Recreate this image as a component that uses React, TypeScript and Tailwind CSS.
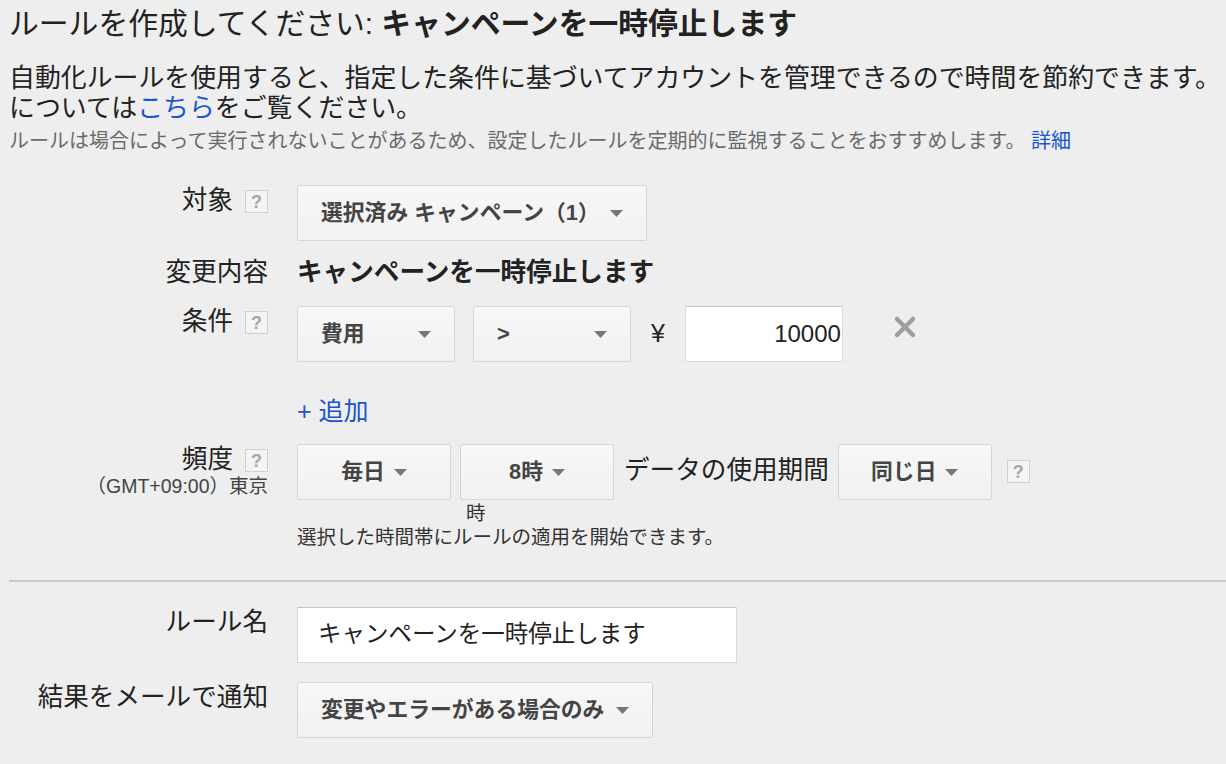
import type { ReactNode } from "react";

function Help({ className = "" }: { className?: string }) {
  return (
    <span className={`flex h-[23px] w-[23px] shrink-0 items-center justify-center border border-[#d0d0d0] bg-[#f4f4f4] text-[18px] font-bold leading-none text-[#a6a6a6] ${className}`}>?</span>
  );
}

function Arrow() {
  return (
    <svg width="13" height="7" viewBox="0 0 13 7" className="shrink-0">
      <path d="M0 0 H13 L6.5 7 Z" fill="#777" />
    </svg>
  );
}

function Select({ label, width, center = false }: { label: ReactNode; width: string; center?: boolean }) {
  return (
    <div className={`flex h-[56px] shrink-0 items-center rounded-[2px] border border-[#d6d6d6] bg-gradient-to-b from-[#f7f7f7] to-[#f1f1f1] text-[21.8px] font-bold text-[#444] ${width} ${center ? "justify-center gap-[9px]" : "justify-between px-[23px]"}`}>
      <span className="whitespace-nowrap">{label}</span>
      <Arrow />
    </div>
  );
}

function Row({ label, children, className = "" }: { label: ReactNode; children: ReactNode; className?: string }) {
  return (
    <div className={`flex items-start ${className}`}>
      <div className="flex w-[268px] shrink-0 justify-end">{label}</div>
      <div className="ml-[29px] flex-1">{children}</div>
    </div>
  );
}

function Label({ text, help = false }: { text: string; help?: boolean }) {
  return (
    <div className="flex items-start gap-[12px]">
      <span className="text-[25.6px] leading-[30px] text-[#222]">{text}</span>
      {help ? <Help className="mt-[5px]" /> : null}
    </div>
  );
}

export default function App() {
  return (
    <main className="min-h-screen overflow-hidden bg-[#eeeeee] pb-10 font-['Liberation_Sans','Noto_Sans_CJK_JP',sans-serif] text-[#222]">
      <div className="pl-[9px] pt-[6px]">
        <h1 className="whitespace-nowrap text-[29.8px] font-normal leading-[36px]">
          ルールを作成してください: <span className="font-bold">キャンペーンを一時停止します</span>
        </h1>
        <p className="mt-[21px] whitespace-nowrap text-[25.9px] leading-[30px]">
          自動化ルールを使用すると、指定した条件に基づいてアカウントを管理できるので時間を節約できます。
          <br />
          については<span className="text-[#1a56cc]">こちら</span>をご覧ください。
        </p>
        <p className="mt-[5px] whitespace-nowrap text-[20px] leading-[26px] text-[#6a6a6a]">
          ルールは場合によって実行されないことがあるため、設定したルールを定期的に監視することをおすすめします。 <span className="text-[#1a56cc]">詳細</span>
        </p>
      </div>

      <Row className="mt-[31px]" label={<Label text="対象" help />}>
        <Select label="選択済み キャンペーン（1）" width="w-[350px]" />
      </Row>

      <Row className="mt-[16px]" label={<Label text="変更内容" />}>
        <p className="text-[25.6px] font-bold leading-[30px]">キャンペーンを一時停止します</p>
      </Row>

      <Row className="mt-[19px]" label={<Label text="条件" help />}>
        <div className="flex items-start">
          <Select label="費用" width="w-[158px]" />
          <div className="ml-[18px]"><Select label=">" width="w-[158px]" /></div>
          <span className="ml-[20px] mt-[12px] text-[25px] leading-[30px]">¥</span>
          <div className="ml-[20px] flex h-[56px] w-[158px] items-center justify-end border border-[#d9d9d9] border-t-[#c4c4c4] bg-white pr-[1px] text-[24px]">10000</div>
          <svg width="24" height="24" viewBox="0 0 24 24" className="ml-[50px] mt-[9px]">
            <path d="M4 4 L20 20 M20 4 L4 20" stroke="#9e9e9e" strokeWidth="4.5" strokeLinecap="round" />
          </svg>
        </div>
      </Row>

      <Row className="mt-[34px]" label={null}>
        <p className="text-[25px] leading-[30px] text-[#1a56cc]">+ 追加</p>
      </Row>

      <Row
        className="mt-[18px]"
        label={
          <div className="flex flex-col items-end">
            <Label text="頻度" help />
            <span className="text-[19.5px] leading-[24px] text-[#444]">（GMT+09:00）東京</span>
          </div>
        }
      >
        <div className="flex items-start">
          <Select label="毎日" width="w-[154px]" center />
          <div className="ml-[9px]"><Select label="8時" width="w-[154px]" center /></div>
          <span className="ml-[10px] mt-[11px] whitespace-nowrap text-[25.6px] leading-[30px]">データの使用期間</span>
          <div className="ml-[9px]"><Select label="同じ日" width="w-[154px]" center /></div>
          <Help className="ml-[15px] mt-[16px]" />
        </div>
        <p className="ml-[169px] mt-[1px] text-[19.5px] leading-[24px] text-[#333]">時</p>
        <p className="text-[19.5px] leading-[24px] text-[#333]">選択した時間帯にルールの適用を開始できます。</p>
      </Row>

      <div className="ml-[9px] mt-[31px] border-t-2 border-[#cacaca]" />

      <Row className="mt-[25px]" label={<Label text="ルール名" />}>
        <div className="flex h-[56px] w-[440px] items-center border border-[#d9d9d9] border-t-[#c4c4c4] bg-white pl-[20px] text-[23.5px]">キャンペーンを一時停止します</div>
      </Row>

      <Row className="mt-[19px]" label={<Label text="結果をメールで通知" />}>
        <Select label="変更やエラーがある場合のみ" width="w-[356px]" />
      </Row>
    </main>
  );
}
